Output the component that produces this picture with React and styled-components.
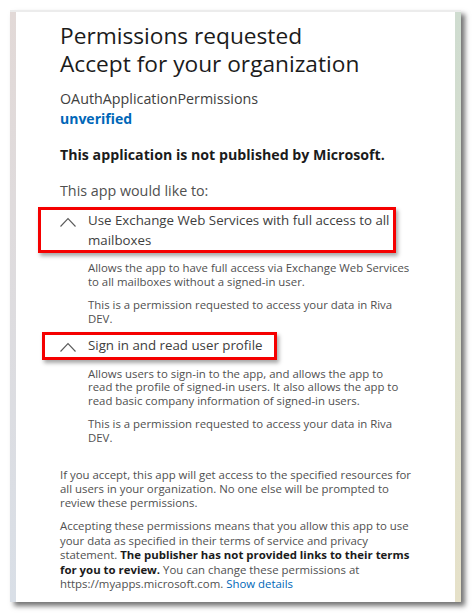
import styled, { createGlobalStyle } from "styled-components";

const GlobalStyle = createGlobalStyle`
  html, body {
    margin: 0;
    padding: 0;
    background: #ffffff;
  }
  body {
    font-family: "Open Sans", "Noto Sans", sans-serif;
    color: #1b1b1b;
  }
`;

const Page = styled.div`
  width: 473px;
  height: 613px;
  padding: 10px 0 0 10px;
  box-sizing: border-box;
`;

const Frame = styled.div`
  display: flex;
  width: 451px;
  height: 592px;
  border-top: 2px solid #ececec;
  box-sizing: border-box;
  box-shadow: 4px 4px 5px rgba(0, 0, 0, 0.55);
`;

const Strip = styled.div`
  width: 6px;
  flex: none;
  background: linear-gradient(${(p) => p.$top}, ${(p) => p.$bottom});
`;

const Panel = styled.div`
  flex: 1;
  background: #ffffff;
  padding: 10px 37px 0 44px;
  box-sizing: border-box;
  overflow: hidden;
`;

const Title = styled.h1`
  margin: 0;
  font-size: 22.7px;
  font-weight: 400;
  line-height: 28px;
  color: #1b1b1b;
`;

const AppName = styled.div`
  margin-top: 11px;
  font-size: 14.3px;
  line-height: 20px;
  color: #404040;
`;

const Unverified = styled.div`
  font-size: 14px;
  font-weight: 700;
  line-height: 20px;
  color: #0067b8;
`;

const Notice = styled.p`
  margin: 16px 0 0;
  font-size: 14.2px;
  font-weight: 700;
  line-height: 20px;
  color: #1b1b1b;
`;

const Lead = styled.p`
  margin: 16px 0 0;
  font-size: 14.3px;
  line-height: 20px;
  color: #505050;
`;

const Permission = styled.section`
  margin-top: ${(p) => p.$gap}px;
`;

const Header = styled.div`
  position: relative;
  display: flex;
  align-items: flex-start;
`;

/* red annotation box drawn over the header */
const Highlight = styled.div`
  position: absolute;
  left: ${(p) => p.$left}px;
  top: -3px;
  width: ${(p) => p.$width}px;
  height: ${(p) => p.$height}px;
  border: 3px solid #f50000;
  box-sizing: border-box;
  box-shadow: 2px 3px 4px rgba(0, 0, 0, 0.35);
  pointer-events: none;
`;

const Chevron = styled.svg`
  flex: none;
  width: 16px;
  height: 20px;
  margin-right: 12px;
`;

const HeaderText = styled.div`
  font-size: 13.3px;
  line-height: 20px;
  color: #404040;
`;

const Details = styled.div`
  width: 322.3px;
  padding: ${(p) => p.$gap}px 0 0 28px;
`;

const Small = styled.p`
  margin: 0;
  font-size: 11.4px;
  line-height: ${(p) => p.$line || 13.8}px;
  color: #505050;

  & + & {
    margin-top: ${(p) => p.$gap || 10.5}px;
  }
`;

const Footer = styled.div`
  margin-top: 23px;
`;

const Strong = styled.strong`
  color: #1b1b1b;
`;

const Link = styled.a`
  color: #0067b8;
  text-decoration: none;
`;

function Up() {
  return (
    <Chevron viewBox="0 0 16 20">
      <path d="M0.5 16.5 L8 8.5 L15.5 16.5" fill="none" stroke="#5a5a5a" strokeWidth="1.1" />
    </Chevron>
  );
}

const permissions = [
  {
    title: "Use Exchange Web Services with full access to all mailboxes",
    gap: 9,
    detailGap: 11,
    box: { left: -22, width: 358, height: 46 },
    text: "Allows the app to have full access via Exchange Web Services to all mailboxes without a signed-in user.",
  },
  {
    title: "Sign in and read user profile",
    gap: 9,
    detailGap: 12,
    box: { left: -18, width: 235, height: 28 },
    text: "Allows users to sign-in to the app, and allows the app to read the profile of signed-in users. It also allows the app to read basic company information of signed-in users.",
  },
];

export default function App() {
  return (
    <>
      <GlobalStyle />
      <Page>
        <Frame>
          <Strip $top="#e2d9d7" $bottom="#d9dfe7" />
          <Panel>
            <Title>
              Permissions requested
              <br />
              Accept for your organization
            </Title>
            <AppName>OAuthApplicationPermissions</AppName>
            <Unverified>unverified</Unverified>
            <Notice>This application is not published by Microsoft.</Notice>
            <Lead>This app would like to:</Lead>
            {permissions.map((perm) => (
              <Permission key={perm.title} $gap={perm.gap}>
                <Header>
                  <Up />
                  <HeaderText>{perm.title}</HeaderText>
                  <Highlight $left={perm.box.left} $width={perm.box.width} $height={perm.box.height} />
                </Header>
                <Details $gap={perm.detailGap}>
                  <Small>{perm.text}</Small>
                  <Small>This is a permission requested to access your data in Riva DEV.</Small>
                </Details>
              </Permission>
            ))}
            <Footer>
              <Small $line={14}>
                If you accept, this app will get access to the specified resources for all users
                in your organization. No one else will be prompted to review these permissions.
              </Small>
              <Small $line={14.4} $gap={9.4}>
                Accepting these permissions means that you allow this app to use your data as
                specified in their terms of service and privacy statement.{" "}
                <Strong>The publisher has not provided links to their terms for you to review.</Strong>{" "}
                You can change these permissions at https://myapps.microsoft.com.{" "}
                <Link href="#">Show details</Link>
              </Small>
            </Footer>
          </Panel>
          <Strip $top="#cfdcd0" $bottom="#e6e1c9" />
        </Frame>
      </Page>
    </>
  );
}
